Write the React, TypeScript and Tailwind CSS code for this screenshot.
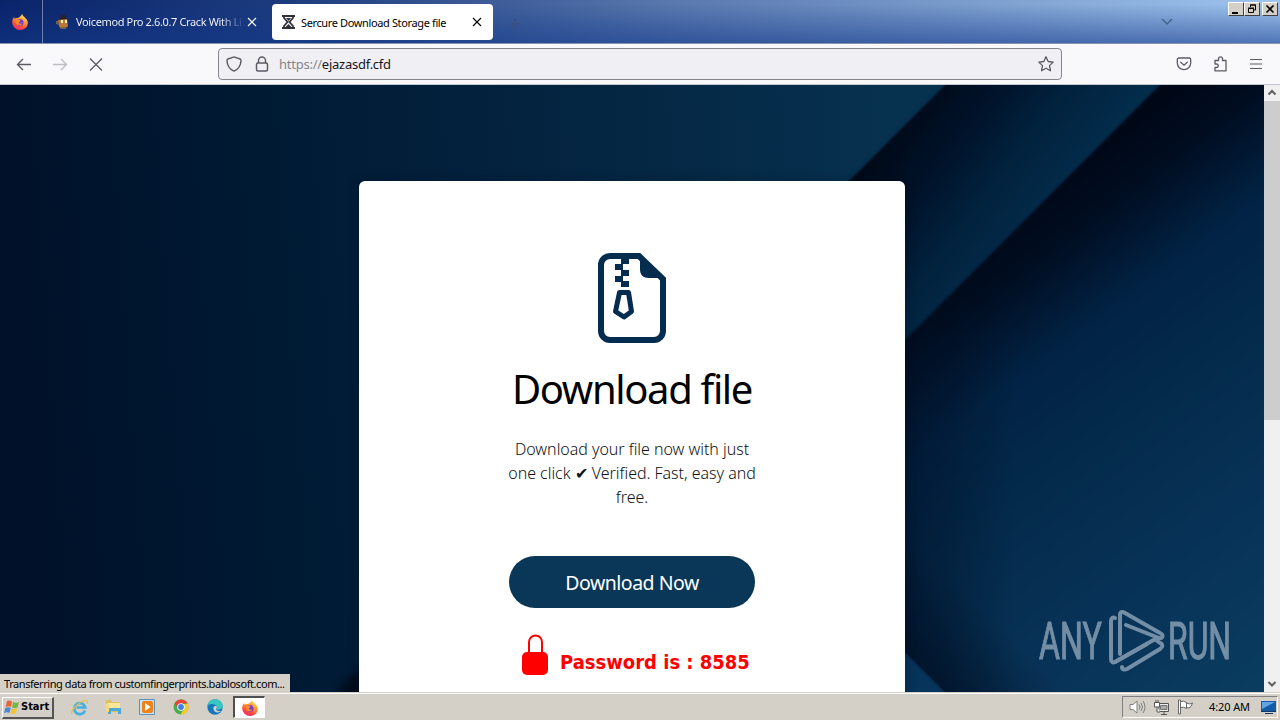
import type { ReactNode } from "react";
import { clsx } from "clsx";

function Backdrop() {
  return (
    <svg className="absolute inset-0 h-full w-full" viewBox="0 0 1264 607" preserveAspectRatio="none">
      <defs>
        <linearGradient id="base" gradientUnits="userSpaceOnUse" x1="0" y1="60" x2="880" y2="0">
          <stop offset="0" stopColor="#001129" />
          <stop offset="0.3" stopColor="#001a34" />
          <stop offset="0.6" stopColor="#04233f" />
          <stop offset="1" stopColor="#06314f" />
        </linearGradient>
        <linearGradient id="fold1" gradientUnits="userSpaceOnUse" x1="596" y1="447" x2="732" y2="549">
          <stop offset="0" stopColor="#000a19" />
          <stop offset="0.32" stopColor="#00132a" />
          <stop offset="0.68" stopColor="#02233f" />
          <stop offset="1" stopColor="#032b4a" />
        </linearGradient>
        <linearGradient id="fold2" gradientUnits="userSpaceOnUse" x1="420" y1="560" x2="746" y2="995">
          <stop offset="0" stopColor="#000716" />
          <stop offset="0.11" stopColor="#000d20" />
          <stop offset="0.27" stopColor="#022345" />
          <stop offset="0.46" stopColor="#042b4c" />
          <stop offset="0.73" stopColor="#083358" />
          <stop offset="1" stopColor="#0a3d60" />
        </linearGradient>
        <linearGradient id="side" x1="0" x2="1">
          <stop offset="0" stopColor="#000f24" stopOpacity="0.5" />
          <stop offset="1" stopColor="#000f24" stopOpacity="0" />
        </linearGradient>
        <linearGradient id="low" gradientUnits="userSpaceOnUse" x1="920" y1="590" x2="985" y2="525">
          <stop offset="0" stopColor="#000d20" stopOpacity="0.65" />
          <stop offset="1" stopColor="#000d20" stopOpacity="0" />
        </linearGradient>
        <filter id="soft" colorInterpolationFilters="sRGB">
          <feGaussianBlur stdDeviation="1" />
        </filter>
        <filter id="softer" colorInterpolationFilters="sRGB">
          <feGaussianBlur stdDeviation="5" />
        </filter>
      </defs>
      <rect width="1264" height="607" fill="url(#base)" />
      <path d="M948-3 330 615H1280V-3Z" fill="url(#fold1)" filter="url(#soft)" />
      <path d="M1163-3 545 615H1280V-3Z" fill="url(#fold2)" filter="url(#soft)" />
      <rect width="480" height="607" fill="url(#base)" />
      <rect x="905" y="256" width="110" height="351" fill="url(#side)" />
      <path d="M905 440V567L945 607H1100Z" fill="url(#low)" />
      <path d="M900 563 948 611H900Z" fill="#06345a" filter="url(#soft)" />
      <path d="M362 580 335 610H362Z" fill="#000819" filter="url(#softer)" />
    </svg>
  );
}

function Firefox({ size = 16 }: { size?: number }) {
  return (
    <svg width={size} height={size} viewBox="0 0 16 16">
      <defs>
        <linearGradient id="fx" x1="0.8" y1="0" x2="0.3" y2="1">
          <stop offset="0" stopColor="#fff36b" />
          <stop offset="0.4" stopColor="#ff9a2e" />
          <stop offset="0.75" stopColor="#ff4a3d" />
          <stop offset="1" stopColor="#e6287a" />
        </linearGradient>
      </defs>
      <path d="M10.2 0c.4 1.8 1.5 2.4 2.700 3.500 1.600 1.500 2.900 3 2.900 5.300A7.700 7.100 0 0 1 8 16 7.800 7.500 0 0 1 .2 8.500C.2 6 1 4.200 2.200 2.900l.4 1.800C3.500 3.900 4.300 3.800 5 4 6.600 3.900 8.600 2.500 10.200 0Z" fill="url(#fx)" />
      <circle cx="8" cy="8.600" r="3.500" fill="#7a3fd0" />
      <path d="M4 6.200c2-1.200 3.800-.5 4.600.6L6.800 8.200c.2 1.600 2.200 2 3.600 1-1.200 3.200-5.900 2.700-6.400-.5Z" fill="#ff8a2a" />
    </svg>
  );
}

function TabTitle({ children, className }: { children: ReactNode; className?: string }) {
  return (
    <span className={clsx("shrink-0 text-[11px] tracking-[-0.37px] whitespace-nowrap", className)}>{children}</span>
  );
}

function CloseTab({ className }: { className?: string }) {
  return (
    <svg className={clsx("shrink-0", className)} width="10" height="10" viewBox="0 0 10 10" stroke="currentColor" strokeWidth="1.100">
      <path d="m1 1 8 8M9 1 1 9" />
    </svg>
  );
}

function WindowButton({ children, className }: { children: ReactNode; className?: string }) {
  return (
    <span
      className={clsx(
        "flex h-3.5 w-4 items-center justify-center border border-t-white border-r-[#404040] border-b-[#404040] border-l-white bg-[#d4d0c8]",
        className
      )}
    >
      {children}
    </span>
  );
}

function TabBar() {
  return (
    <header className="flex h-[43px] shrink-0 items-start bg-[linear-gradient(to_bottom,#0a246a00_10%,#12388a90),linear-gradient(to_right,#0a246a,#1c3b7e_22%,#5877ad_52%,#9fc4ee)]">
      <div className="flex h-[43px] w-[43px] items-center justify-center border-r border-white/40 pr-0.5">
        <Firefox />
      </div>
      <div className="flex h-[43px] w-[229px] items-center pl-3">
        <svg width="15" height="16" viewBox="0 0 15 16">
          <path d="M4 5 6 1h4l2 4v1H4Z" fill="#242327" />
          <path d="m3 6 9-1 1 7-3 3H6l-2-3Z" fill="#b97732" />
          <path d="M6 6h2v3H6Zm4 0h2v3h-2Z" fill="#fff1bf" />
          <path d="M1 7h2l1 4-3-1Zm5 6h5v2H6Z" fill="#6d6558" />
        </svg>
        <TabTitle className="mt-0.5 ml-[6px] w-[171px] bg-[linear-gradient(to_right,#fff_84%,#ffffff10_98%)] bg-clip-text text-transparent">
          Voicemod Pro 2.6.0.7 Crack With Li
        </TabTitle>
        <CloseTab className="text-white" />
      </div>
      <div className="mt-1 flex h-9 w-[221px] items-center rounded bg-white px-2.5 text-black">
        <svg width="13" height="14" viewBox="0 0 13 14" fill="none" stroke="#303038" strokeWidth="1.800">
          <path d="M0 1h13M0 13h13M2 1v2l3.500 4L2 11v2M11 1v2L7.500 7l3.500 4v2" />
          <path d="M4 3h5L6.500 6ZM3.500 12l3-3 3 3Z" fill="#303038" stroke="none" />
        </svg>
        <TabTitle className="mt-0.5 ml-[6px] w-[171px]">Sercure Download Storage file</TabTitle>
        <CloseTab />
      </div>
      <svg className="mt-[18px] ml-4" width="12" height="12" viewBox="0 0 12 12" stroke="#3d5078">
        <path d="M6 1v10M1 6h10" strokeWidth="1.500" />
      </svg>
      <svg className="mt-[17px] ml-auto" width="14" height="10" viewBox="0 0 14 10" fill="none" stroke="#43648f" strokeWidth="1.500">
        <path d="m2 2 5 5 5-5" />
      </svg>
      <div className="mt-[2px] mr-[2px] ml-[54px] flex">
        <WindowButton>
          <svg width="14" height="12" viewBox="0 0 14 12">
            <path d="M3 9h6v2H3Z" />
          </svg>
        </WindowButton>
        <WindowButton>
          <svg width="12" height="12" viewBox="0 0 12 12" fill="none" stroke="#000">
            <path d="M4.500 4V2h5v5H8M4 2h6M2.500 5.500h5v4h-5ZM2 5h6" />
          </svg>
        </WindowButton>
        <WindowButton className="ml-[2px]">
          <svg width="10" height="10" viewBox="0 0 10 10" stroke="#000" strokeWidth="1.700">
            <path d="m1.500 1.500 7 7m0-7-7 7" />
          </svg>
        </WindowButton>
      </div>
    </header>
  );
}

function NavBar() {
  return (
    <nav className="flex h-[42px] shrink-0 items-center border-t border-b border-t-[#8993ae] border-b-[#c5c7cf] bg-[#f9f9fb] text-[#5b5b66]">
      <svg className="ml-4" width="16" height="16" viewBox="0 0 16 16" fill="none" stroke="currentColor" strokeWidth="1.400">
        <path d="M15 8.500H1.500M7 3 1.500 8.500 7 14" />
      </svg>
      <svg className="ml-5 text-[#bdbdc4]" width="16" height="16" viewBox="0 0 16 16" fill="none" stroke="currentColor" strokeWidth="1.400">
        <path d="M1 8.500h13.500M9 3l5.500 5.500L9 14" />
      </svg>
      <svg className="ml-5" width="16" height="16" viewBox="0 0 16 16" stroke="currentColor" strokeWidth="1.300">
        <path d="m2 2.500 12 12M14 2.500l-12 12" />
      </svg>
      <div className="ml-[114px] flex h-8 w-[844px] items-center rounded border border-[#85858e] bg-[#f0f0f4] px-[7px]">
        <svg width="16" height="16" viewBox="0 0 16 16" fill="none" stroke="currentColor" strokeWidth="1.400">
          <path d="M8 .9 14 3c.8.3 1 .8 1 1.500-.1 4.500-2.300 8.500-7 10.700C3.300 13 1.100 9 1 4.500 1 3.800 1.200 3.300 2 3Z" />
        </svg>
        <svg className="ml-3" width="16" height="16" viewBox="0 0 16 16" fill="none" stroke="currentColor" strokeWidth="1.500">
          <rect x="2.500" y="7" width="11" height="8" rx="1.500" />
          <path d="M4.500 7V4.500a3.500 3.500 0 0 1 7 0V7" />
        </svg>
        <span className="mt-0.5 ml-[9px] text-[13px] tracking-[-0.25px] text-[#85858c]">
          https://<span className="text-[#15141a]">ejazasdf.cfd</span>
        </span>
        <svg className="ml-auto" width="16" height="16" viewBox="0 0 16 16" fill="none" stroke="currentColor" strokeWidth="1.300" strokeLinejoin="round">
          <path d="m8 .8 2.200 4.700 5 .6-3.700 3.500 1 5.200L8 12.300l-4.500 2.500 1-5.200L.8 6.100l5-.6Z" />
        </svg>
      </div>
      <svg className="ml-[114px]" width="16" height="16" viewBox="0 0 16 16" fill="none" stroke="currentColor" strokeWidth="1.300" strokeLinecap="round">
        <path d="M2.800 2h10.400c.9 0 1.500.6 1.500 1.500V7a6.700 6.700 0 0 1-13.400 0V3.500c0-.9.6-1.500 1.500-1.500Z" />
        <path d="m4.700 6.200 3.300 3 3.300-3" />
      </svg>
      <svg className="ml-5" width="17" height="16" viewBox="0 0 17 16" fill="none" stroke="currentColor" strokeWidth="1.300" strokeLinejoin="round">
        <path d="M3 4.500h3.500V2.800a2 2 0 0 1 4 0v1.700H14v10.300H3V11.500h1.500a1.700 1.700 0 0 0 0-3.500H3Z" />
      </svg>
      <svg className="ml-[19px]" width="16" height="16" viewBox="0 0 16 16" stroke="currentColor" strokeWidth="1.200">
        <path d="M2 3.500h12M2 8h12M2 12.500h12" />
      </svg>
    </nav>
  );
}

function ZipIcon() {
  return (
    <svg className="mx-auto block" width="68" height="90" viewBox="0 0 68 90" fill="none" stroke="#042c4e" strokeWidth="6">
      <path d="M41 3H12a9 9 0 0 0-9 9v66a9 9 0 0 0 9 9h44a9 9 0 0 0 9-9V26Z" />
      <path d="M42 1v15c0 6 3 9 9 9h15Z" fill="#042c4e" stroke="none" />
      <path d="M23 5h8v6h-8Zm-6 6h8v6h-8Zm6 6h8v6h-8Zm-6 6h8v6h-8Zm6 5h8v6h-8Z" fill="#042c4e" stroke="none" />
      <path d="M21.500 39.500h9l3 19-7.500 5.500-8.500-5.500Z" strokeWidth="5" strokeLinejoin="round" />
    </svg>
  );
}

function Watermark() {
  return (
    <svg className="absolute right-[28px] bottom-[19px] overflow-visible" width="198" height="64" viewBox="0 0 198 64" opacity="0.8">
      <g fill="#8ea5b9" stroke="#8ea5b9" strokeWidth="1.100" fontFamily="Roboto, sans-serif" fontSize="51">
        <text transform="translate(1 49.500) scale(0.63 1)">ANY</text>
        <text transform="translate(130 49.500) scale(0.625 1)">RUN</text>
      </g>
      <g fill="none" stroke="#8ea5b9" strokeWidth="4" strokeLinejoin="round" strokeLinecap="round">
        <path d="M77 9c-2-1-4 0-4 3v38c0 3 2 4 4 3l42-24" />
        <path d="M82 45V6c0-3 2-4 5-2l35 20c4 2 3 6-1 5L88 16" />
        <path d="M109 35 77 53M84 58c0 3 3 3 5 2l33-20c3-2 3-5 0-6l-4-3" />
      </g>
    </svg>
  );
}

function Page() {
  return (
    <main className="flex min-h-0 flex-1 bg-[#f0f0f0]">
      <div className="relative flex-1 overflow-hidden">
        <Backdrop />
        <section className="relative mt-24 ml-[359px] h-[540px] w-[546px] rounded-md bg-white pt-[72px] text-center shadow-[0_0_12px_#00081850]">
          <ZipIcon />
          <h1 className="mt-[21px] text-[40px] leading-[50px] tracking-[-1.35px] text-black">Download file</h1>
          <p className="mx-auto mt-[23px] w-[260px] text-base leading-6 font-light tracking-[-0.03px] text-[#101214]">
            Download your file now with just
            <br />
            one click <span className="font-['DejaVu_Sans'] text-base leading-none">✔</span> Verified. Fast, easy and
            <br />
            free.
          </p>
          <button className="mx-auto mt-[47px] block h-[52px] w-[246px] rounded-full bg-[#0a3758] pt-px text-[19.5px] tracking-[-0.5px] text-white">
            Download Now
          </button>
          <div className="ml-[163px] flex items-start pt-[26px] text-[#ff0000]">
            <svg width="26" height="42" viewBox="0 0 26 42">
              <path d="M7 20V8a6.500 6.500 0 0 1 13 0v12" fill="none" stroke="currentColor" strokeWidth="2" />
              <rect y="18" width="26" height="23" rx="5" fill="currentColor" />
            </svg>
            <span className="mt-[14px] ml-3 font-['DejaVu_Sans_Condensed','DejaVu_Sans'] text-xl leading-7 font-bold whitespace-nowrap">
              Password is : 8585
            </span>
          </div>
        </section>
        <Watermark />
        <div className="absolute bottom-0 left-0 h-[18px] w-[290px] bg-[#d4d0c8] pl-1 text-[11px] leading-5 tracking-[-0.43px] whitespace-nowrap text-black">
          Transferring data from customfingerprints.bablosoft.com...
        </div>
      </div>
      <div className="flex w-4 flex-col items-center text-[#606060]">
        <svg width="16" height="16" viewBox="0 0 16 16" fill="none" stroke="currentColor" strokeWidth="2">
          <path d="m4.500 9.500 3.500-3.500 3.500 3.500" />
        </svg>
        <div className="h-[319px] w-full bg-[#cdcdcd]" />
        <svg className="mt-auto" width="16" height="16" viewBox="0 0 16 16" fill="none" stroke="currentColor" strokeWidth="2">
          <path d="m4.500 6 3.500 3.500L11.500 6" />
        </svg>
      </div>
    </main>
  );
}

function TaskIcons() {
  return (
    <>
      <svg className="ml-[17px]" width="17" height="17" viewBox="0 0 17 17" fill="none">
        <path d="M14 11.500A5.500 5.500 0 1 1 14.200 8.500H5.500" stroke="#42afe6" strokeWidth="2.700" />
        <path d="M1 15c-2-4 10-15 15-13 1 .5.500 2 0 3" stroke="#e6c043" strokeWidth="1.300" />
      </svg>
      <svg className="ml-[17px]" width="17" height="16" viewBox="0 0 17 16">
        <path d="M1 1h5l1 2h8v10H1Z" fill="#dfbf62" />
        <path d="M2 4h13v6H2Z" fill="#fbe796" />
        <path d="M3 9h13v6h-3v-3H6v3H3Z" fill="#4fa9d6" />
        <path d="M1 5h3v8H1Z" fill="#f3da84" />
      </svg>
      <svg className="ml-[17px]" width="16" height="16" viewBox="0 0 16 16">
        <path d="M.5.500h15v15H.5Z" fill="#cce1f2" stroke="#5a91bd" />
        <rect x="3" y="2" width="11" height="12" rx="2" fill="#ee8118" />
        <path d="m6 4 5.500 4L6 12Z" fill="#fff" />
      </svg>
      <svg className="ml-[18px]" width="16" height="16" viewBox="0 0 16 16">
        <circle cx="8" cy="8" r="7.500" fill="#4bad50" />
        <path d="M1.500 4.200A7.500 7.500 0 0 1 14.700 4.500H8L4.800 9.500Z" fill="#e94736" />
        <path d="M14.700 4.500A7.500 7.500 0 0 1 7.500 15.500L11.300 9.500 11 5Z" fill="#f7c92e" />
        <circle cx="8" cy="8" r="3.800" fill="#fff" />
        <circle cx="8" cy="8" r="2.900" fill="#3f7fe8" />
      </svg>
      <svg className="ml-[18px]" width="16" height="16" viewBox="0 0 16 16">
        <circle cx="8" cy="8" r="7.700" fill="#1679bd" />
        <path d="M.4 7C1 2.500 4.500.3 8.300.3c4.500 0 7.500 3.200 7.400 6.500 0 3-2.500 4.300-6 3.600-1.400-.4.600-1.200.1-3C9 4.700 3 3.800.4 7Z" fill="#39c6c1" />
        <path d="M9.800 7.400C7 6 5.400 9 7 11.400c1.800 2.600 5.200 2.400 7.300.9-1-.1-5 .3-5.300-2.300 0-.8 1-1 .8-2.600Z" fill="#d4d0c8" />
      </svg>
    </>
  );
}

function Taskbar() {
  return (
    <footer className="flex h-7 shrink-0 items-center border-t border-[#d4d0c8] bg-[#d4d0c8] text-[11px] text-black shadow-[inset_0_1px_0_#fff]">
      <div className="mt-[2px] ml-[2px] flex h-[22px] w-[52px] items-center border-t border-r-2 border-b-2 border-l border-t-white border-r-[#555] border-b-[#555] border-l-white pl-px">
        <svg width="16" height="15" viewBox="0 0 16 15">
          <path d="M3 1c2-1 3-.5 5 .5L7 7C5 6 4 6 1.500 7Z" fill="#ee6238" />
          <path d="M9 2c2 1 4 1 6 0l-1.500 5.500c-2 1-4 .7-5.500 0Z" fill="#75b844" />
          <path d="M1.300 8c2-1 4-.7 5.500 0l-1.500 5c-2-1-3.500-1-5.300 0Z" fill="#4a88d3" />
          <path d="M7.700 8.500c2 .8 3.500.8 5.500 0l-1.500 5c-2 1-4 .5-5.500-.3Z" fill="#f3c43a" />
        </svg>
        <b className="mt-px ml-px font-['DejaVu_Sans_Condensed','DejaVu_Sans'] text-[11px]">Start</b>
      </div>
      <div className="mt-px flex items-center">
        <TaskIcons />
        <div className="ml-2.5 flex h-[22px] w-8 items-center justify-center border-t-2 border-r border-b border-l-2 border-t-[#505050] border-r-white border-b-white border-l-[#505050] bg-white">
          <Firefox />
        </div>
      </div>
      <div className="mt-px mr-[2px] ml-auto flex h-[22px] w-[156px] items-center border border-t-[#808080] border-r-white border-b-white border-l-[#808080] pl-1.5">
        <svg width="17" height="16" viewBox="0 0 17 16" fill="none" stroke="#808080">
          <path d="M1 5.500h3L8 2v12l-4-3.500H1Z" fill="#fff" />
          <path d="M10 5.500q2 2.500 0 5M12 4q3 4 0 8M14 2q4 6 0 12" />
        </svg>
        <svg className="ml-[7px]" width="17" height="16" viewBox="0 0 17 16" fill="none" stroke="#555">
          <path d="M6 4.500h9.500v8H6ZM8 15.500h6M11 12.500v3" fill="#eee" />
          <path d="M7.500 6.500H14v4H7.500Z" fill="#aaa" stroke="#777" />
          <path d="M1.500 3.500h5V8h-5ZM3 1v2.500M5 1v2.500M4 8v5h3" fill="#fff" />
        </svg>
        <svg className="ml-[7px]" width="17" height="16" viewBox="0 0 17 16" stroke="#666" fill="#fff">
          <path d="M1.500 1v14h2V1ZM3.500 2.500q3-1 6 1v6q-3-2-6-1ZM9.500 4q3 2 6 0-1 4-3.500 5l-2.500-.5Z" />
        </svg>
        <span className="ml-[15px] tracking-[-0.1px] whitespace-nowrap">4:20 AM</span>
        <svg className="ml-auto" width="17" height="16" viewBox="0 0 17 16">
          <path d="M1 2h15v11H1Z" fill="#155ca8" />
          <path d="M2 3h13L2 10Z" fill="#65a4e2" />
          <path d="M1 12h15v1H1ZM5 14h8v1H5Z" fill="#153864" />
        </svg>
      </div>
    </footer>
  );
}

export default function App() {
  return (
    <div className="flex h-[720px] w-[1280px] flex-col overflow-hidden bg-[#d4d0c8] font-['Noto_Sans',sans-serif]">
      <TabBar />
      <NavBar />
      <Page />
      <Taskbar />
    </div>
  );
}
